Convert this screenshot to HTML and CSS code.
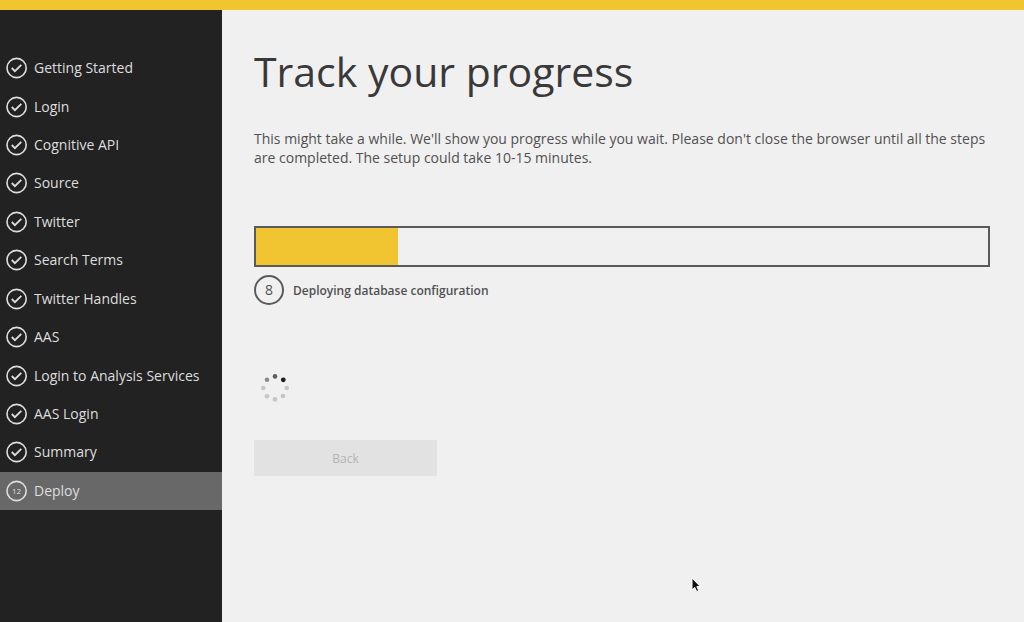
FILE: index.html
```html
<!DOCTYPE html>
<html lang="en">
<head>
<meta charset="utf-8">
<meta name="viewport" content="width=device-width, initial-scale=1">
<title>Track your progress</title>
<link rel="stylesheet" href="styles.css">
</head>
<body class="page">
<svg class="defs" width="0" height="0" aria-hidden="true">
  <symbol id="check" viewBox="0 0 22 22">
    <circle cx="10.6" cy="11" r="9.6" fill="none" stroke="currentColor" stroke-width="1.6"/>
    <path d="M5.8 11l3.1 3.2 6.4-6.4" fill="none" stroke="currentColor" stroke-width="1.8"/>
  </symbol>
</svg>
<div class="topbar"></div>
<div class="shell">
  <nav class="sidebar" aria-label="Setup steps">
    <ol class="steps">
      <li class="step"><svg class="step-icon"><use href="#check"/></svg><span>Getting Started</span></li>
      <li class="step"><svg class="step-icon"><use href="#check"/></svg><span>Login</span></li>
      <li class="step"><svg class="step-icon"><use href="#check"/></svg><span>Cognitive API</span></li>
      <li class="step"><svg class="step-icon"><use href="#check"/></svg><span>Source</span></li>
      <li class="step"><svg class="step-icon"><use href="#check"/></svg><span>Twitter</span></li>
      <li class="step"><svg class="step-icon"><use href="#check"/></svg><span>Search Terms</span></li>
      <li class="step"><svg class="step-icon"><use href="#check"/></svg><span>Twitter Handles</span></li>
      <li class="step"><svg class="step-icon"><use href="#check"/></svg><span>AAS</span></li>
      <li class="step"><svg class="step-icon"><use href="#check"/></svg><span>Login to Analysis Services</span></li>
      <li class="step"><svg class="step-icon"><use href="#check"/></svg><span>AAS Login</span></li>
      <li class="step"><svg class="step-icon"><use href="#check"/></svg><span>Summary</span></li>
      <li class="step step-current" aria-current="step">
        <svg class="step-icon" viewBox="0 0 22 22">
          <circle cx="10.6" cy="11" r="9.6" fill="none" stroke="currentColor" stroke-width="1.6"/>
          <text class="ring-text" x="10.6" y="14" text-anchor="middle" fill="currentColor">12</text>
        </svg>
        <span>Deploy</span>
      </li>
    </ol>
  </nav>
  <main class="content">
    <h1 class="title">Track your progress</h1>
    <p class="intro">This might take a while. We'll show you progress while you wait. Please don't close the browser until all the steps are completed. The setup could take 10-15 minutes.</p>
    <progress class="bar" max="731" value="142" aria-labelledby="task"></progress>
    <div class="task"><span class="task-number">8</span><span class="task-name" id="task">Deploying database configuration</span></div>
    <svg class="spinner" viewBox="0 0 28 28" role="img" aria-label="Loading">
      <g fill="#c6c6c6">
        <circle cx="2.3" cy="14" r="2.3"/><circle cx="25.7" cy="14" r="2.3"/>
        <circle cx="6" cy="22.2" r="2.3"/><circle cx="22" cy="22" r="2.3"/>
        <circle cx="14" cy="25.4" r="2.3"/>
      </g>
      <circle cx="6" cy="5.8" r="2.3" fill="#8c8c8c"/>
      <circle cx="14" cy="2.4" r="2.3" fill="#5e5e5e"/>
      <circle cx="22.3" cy="5.8" r="2.4" fill="#1c1c1c"/>
    </svg>
    <button class="back" type="button" disabled>Back</button>
  </main>
</div>
<svg class="cursor" viewBox="0 0 10 16" aria-hidden="true">
  <path d="M1 1v12l2.7-2.6 2 4.2 2-1-1.9-4h3.5z" fill="#111" stroke="#fff" stroke-width="1"/>
</svg>
</body>
</html>
```
FILE: styles.css
```css
* { box-sizing: border-box; }

.page {
  margin: 0;
  min-height: 100vh;
  display: flex;
  flex-direction: column;
  position: relative;
  background: #f0f0f0;
  color: #505050;
  font-family: "Open Sans", "Noto Sans", sans-serif;
  font-size: 14px;
}

.defs { position: absolute; }

.topbar {
  height: 10px;
  background: #f1c531;
}

.shell {
  flex: 1;
  display: flex;
}

.sidebar {
  flex: none;
  width: 222px;
  padding-top: 39px;
  background: #222;
  color: #dedede;
}

.steps {
  list-style: none;
  margin: 0;
  padding: 0;
  display: grid;
  grid-auto-rows: 1fr;
  min-height: 461px;
}

.step {
  display: flex;
  align-items: center;
  gap: 6px;
  padding-left: 6px;
  line-height: 20px;
}

.step-current { background: #686868; }

.step-icon {
  flex: none;
  width: 22px;
  height: 22px;
}

.ring-text { font-size: 8px; }

.content {
  flex: 1;
  min-width: 0;
  padding: 29px 34px 32px 32px;
  display: flex;
  flex-direction: column;
  align-items: flex-start;
}

.title {
  margin: 0;
  color: #393939;
  font-size: 41px;
  font-weight: 400;
  line-height: 64px;
}

.intro {
  margin: 26px 0 59px;
  line-height: 19px;
}

.bar {
  appearance: none;
  display: block;
  width: 100%;
  height: 41px;
  border: 2px solid #5a5a5a;
  background: #f0f0f0;
}

.bar::-webkit-progress-bar { background: #f0f0f0; }
.bar::-webkit-progress-value { background: #f1c531; }
.bar::-moz-progress-bar { background: #f1c531; }

.task {
  display: flex;
  align-items: center;
  gap: 9px;
  margin-top: 8px;
}

.task-number {
  width: 30px;
  height: 30px;
  border: 2px solid #5a5a5a;
  border-radius: 50%;
  line-height: 26px;
  text-align: center;
}

.task-name {
  font-size: 12px;
  font-weight: 600;
}

.spinner {
  width: 28px;
  height: 28px;
  margin: 69px 0 38px 7px;
}

.back {
  width: 183px;
  height: 36px;
  padding: 0;
  border: 0;
  background: #e2e2e2;
  color: #b4b4b4;
  font: inherit;
  font-size: 12px;
}

/* Pointer drawn over the page */
.cursor {
  position: absolute;
  left: 691px;
  top: 577px;
  width: 10px;
  height: 16px;
}
```
